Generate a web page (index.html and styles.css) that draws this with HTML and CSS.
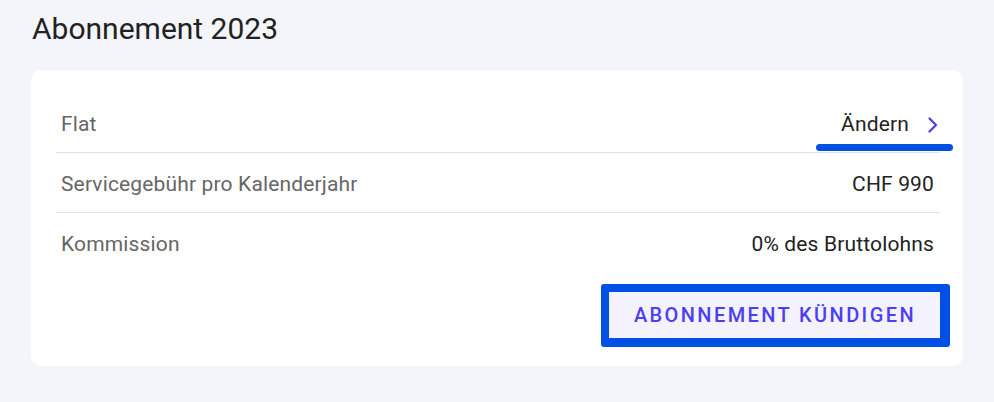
FILE: index.html
```html
<!DOCTYPE html>
<html lang="de">
<head>
    <meta charset="UTF-8">
    <meta name="viewport" content="width=device-width, initial-scale=1.0">
    <title>Abonnement 2023</title>
    <link rel="stylesheet" href="styles.css">
</head>
<body>
    <div class="page">
        <h2 class="page-title">Abonnement 2023</h2>

        <div class="card">
            <div class="row">
                <span class="row-label">Flat</span>
                <a class="row-link" href="#">
                    Ändern
                    <svg class="chevron" width="12" height="18" viewBox="0 0 12 18">
                        <path d="M2.5 2.5 L9 9 L2.5 15.5" fill="none" stroke="currentColor" stroke-width="2.3" stroke-linecap="round" stroke-linejoin="round"/>
                    </svg>
                    <span class="mark-underline"></span>
                </a>
            </div>
            <div class="row">
                <span class="row-label">Servicegebühr pro Kalenderjahr</span>
                <span class="row-value">CHF 990</span>
            </div>
            <div class="row">
                <span class="row-label">Kommission</span>
                <span class="row-value">0% des Bruttolohns</span>
            </div>

            <div class="actions">
                <div class="mark-box">
                    <button type="button" class="btn-cancel">Abonnement kündigen</button>
                </div>
            </div>
        </div>
    </div>
</body>
</html>
```

FILE: styles.css
```css
body {
    font-family: Roboto, "Liberation Sans", sans-serif;
    background-color: #f4f5fa;
    margin: 0;
    padding: 0;
}

.page {
    padding: 11px 31px 0 31px;
}

.page-title {
    margin: 0 0 23px 1px;
    font-size: 30px;
    font-weight: 400;
    line-height: 36px;
    color: #222;
}

.card {
    background-color: #fff;
    border-radius: 10px;
    padding: 23px 23px 19px 25px;
}

.row {
    display: flex;
    justify-content: space-between;
    align-items: center;
    border-bottom: 1px solid #e0e0e0;
    padding: 19px 6px 15px 5px;
    font-size: 21px;
    line-height: 25px;
    letter-spacing: 0.15px;
}

.row:nth-child(3) {
    border-bottom: none;
}

.row-label {
    color: #666;
}

.row-value {
    color: #222;
}

.row-link {
    position: relative;
    display: flex;
    align-items: center;
    gap: 18px;
    height: 25px;
    color: #222;
    text-decoration: none;
    margin-right: -5px;
}

.chevron {
    color: #4b3ff2;
}

.mark-underline {
    position: absolute;
    left: -25px;
    right: -14px;
    bottom: -14px;
    height: 7px;
    border-radius: 4px;
    background-color: #0050e6;
}

.actions {
    display: flex;
    justify-content: flex-end;
    padding-top: 12px;
}

.mark-box {
    border-style: solid;
    border-color: #0050e6;
    border-width: 8px 10px 9px 8px;
    border-radius: 3px;
    margin-right: -10px;
}

.btn-cancel {
    display: block;
    padding: 0 24px 0 25px;
    height: 46px;
    background-color: #f3f2fd;
    color: #4b3ff2;
    border: none;
    font-family: Roboto, "Liberation Sans", sans-serif;
    font-size: 20px;
    font-weight: 500;
    letter-spacing: 2.4px;
    text-transform: uppercase;
    cursor: pointer;
}
```
